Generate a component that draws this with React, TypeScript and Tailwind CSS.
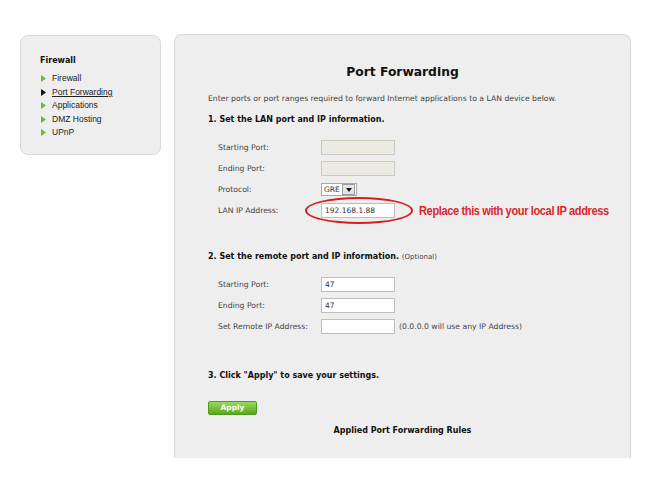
import type { ReactNode } from "react";

const navItems = [
  { label: "Firewall", active: false },
  { label: "Port Forwarding", active: true },
  { label: "Applications", active: false },
  { label: "DMZ Hosting", active: false },
  { label: "UPnP", active: false },
];

function Field({ value, disabled }: { value?: string; disabled?: boolean }) {
  return (
    <div
      className={`w-[74px] h-[15px] border px-[3px] text-[7.5px] leading-[13px] text-[#333] ${
        disabled ? "bg-[#ebeae3] border-[#c9c9c0]" : "bg-white border-[#bdbdbd]"
      }`}
    >
      {value}
    </div>
  );
}

function Row({ label, children }: { label: string; children: ReactNode }) {
  return (
    <div className="flex items-center h-[21px]">
      <span className="w-[103px] text-[7.7px] text-[#444]">{label}</span>
      {children}
    </div>
  );
}

export default function App() {
  return (
    <div
      className="w-[647px] h-[485px] bg-white flex items-start pt-[34px] pl-[20px] overflow-hidden"
      style={{ fontFamily: '"DejaVu Sans", Verdana, sans-serif' }}
    >
      {/* Side nav */}
      <div className="mt-[1px] w-[141px] h-[120px] rounded-[8px] border border-[#d9d9d9] bg-[#eeeeee] pl-[19px] pt-[19px] shrink-0">
        <div className="text-[8px] font-bold text-[#111] leading-[12px]">Firewall</div>
        <div className="mt-[5px] flex flex-col" style={{ fontFamily: '"Liberation Sans", Arial, sans-serif' }}>
          {navItems.map((it) => (
            <div key={it.label} className="flex items-center h-[13.5px] text-[8.5px] text-[#222]">
              <svg width="5" height="7" viewBox="0 0 5 7" className="mr-[6px] ml-[1px]">
                <path d="M0 0 L5 3.5 L0 7 Z" fill={it.active ? "#111" : "#6cb83a"} />
              </svg>
              <span className={it.active ? "underline" : ""}>{it.label}</span>
            </div>
          ))}
        </div>
      </div>

      {/* Main panel */}
      <div className="ml-[13px] w-[457px] h-[424px] rounded-t-[8px] border border-b-0 border-[#d9d9d9] bg-[#eeeeee] pl-[33px] pt-[29px] shrink-0">
        <div className="text-center pr-[33px] text-[12.3px] font-bold leading-[16px] text-[#111]">Port Forwarding</div>
        <div className="mt-[14px] text-[7.7px] leading-[10px] text-[#444]">
          Enter ports or port ranges required to forward Internet applications to a LAN device below.
        </div>
        <div className="mt-[11px] text-[8px] font-bold leading-[10px] text-[#111]">
          1. Set the LAN port and IP information.
        </div>

        <div className="mt-[12px] pl-[10px]">
          <Row label="Starting Port:">
            <Field disabled />
          </Row>
          <Row label="Ending Port:">
            <Field disabled />
          </Row>
          <Row label="Protocol:">
            <div className="flex items-center h-[13px] w-[36px] border border-[#a9a9a9] bg-white text-[7.5px] text-[#333] pl-[2px]">
              <span className="flex-1">GRE</span>
              <span className="flex items-center justify-center w-[13px] h-[11px] mr-[1px] bg-[#e4e4e4] border border-[#9a9a9a]">
                <svg width="6" height="4" viewBox="0 0 6 4">
                  <path d="M0 0 L6 0 L3 4 Z" fill="#111" />
                </svg>
              </span>
            </div>
          </Row>
          <Row label="LAN IP Address:">
            <div className="relative">
              <Field value="192.168.1.88" />
              <div className="absolute left-[-16px] top-[-6px] w-[108px] h-[27px] rounded-[50%] border-[2.5px] border-[#d61f1f]" />
            </div>
            <span
              className="ml-[24px] text-[12px] font-bold text-[#d8262a] tracking-[-0.4px] inline-block origin-left scale-x-[0.92] whitespace-nowrap"
              style={{ fontFamily: '"Liberation Sans", Arial, sans-serif' }}
            >
              Replace this with your local IP address
            </span>
          </Row>
        </div>

        <div className="mt-[31px] text-[8px] font-bold leading-[10px] text-[#111]">
          2. Set the remote port and IP information.{" "}
          <span className="font-normal text-[7px] text-[#444]">(Optional)</span>
        </div>

        <div className="mt-[12px] pl-[10px]">
          <Row label="Starting Port:">
            <Field value="47" />
          </Row>
          <Row label="Ending Port:">
            <Field value="47" />
          </Row>
          <Row label="Set Remote IP Address:">
            <Field />
            <span className="ml-[4px] text-[7.7px] text-[#444]">(0.0.0.0 will use any IP Address)</span>
          </Row>
        </div>

        <div className="mt-[34px] text-[8px] font-bold leading-[10px] text-[#111]">
          3. Click "Apply" to save your settings.
        </div>

        <button className="mt-[20px] block w-[49px] h-[14px] rounded-[2px] border border-[#4f9a1c] bg-gradient-to-b from-[#9bd85a] to-[#56a81c] text-[7.5px] font-bold leading-[12px] text-white">
          Apply
        </button>

        <div className="mt-[11px] pr-[33px] text-center text-[8px] font-bold leading-[10px] text-[#111]">
          Applied Port Forwarding Rules
        </div>
      </div>
    </div>
  );
}
